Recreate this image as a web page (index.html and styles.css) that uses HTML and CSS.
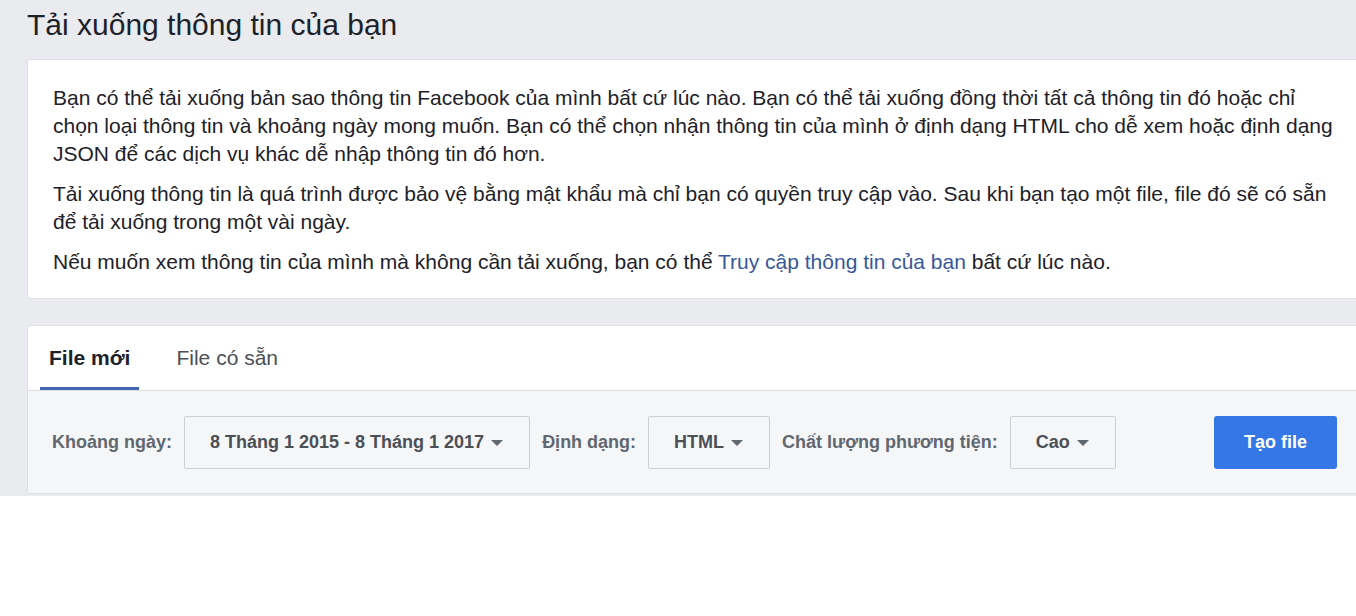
FILE: index.html
```html
<!DOCTYPE html>
<html lang="vi">
<head>
<meta charset="utf-8">
<title>Tải xuống thông tin của bạn</title>
<link rel="stylesheet" href="styles.css">
</head>
<body>
<div class="page">
  <h1 class="title">Tải xuống thông tin của bạn</h1>
  <div class="card intro">
    <p>Bạn có thể tải xuống bản sao thông tin Facebook của mình bất cứ lúc nào. Bạn có thể tải xuống đồng thời tất cả thông tin đó hoặc chỉ chọn loại thông tin và khoảng ngày mong muốn. Bạn có thể chọn nhận thông tin của mình ở định dạng HTML cho dễ xem hoặc định dạng JSON để các dịch vụ khác dễ nhập thông tin đó hơn.</p>
    <p>Tải xuống thông tin là quá trình được bảo vệ bằng mật khẩu mà chỉ bạn có quyền truy cập vào. Sau khi bạn tạo một file, file đó sẽ có sẵn để tải xuống trong một vài ngày.</p>
    <p>Nếu muốn xem thông tin của mình mà không cần tải xuống, bạn có thể <a href="#" class="link">Truy cập thông tin của bạn</a> bất cứ lúc nào.</p>
  </div>
  <div class="card files">
    <div class="tabs">
      <div class="tab active">File mới</div>
      <div class="tab">File có sẵn</div>
    </div>
    <div class="controls">
      <span class="label">Khoảng ngày:</span>
      <div class="select range">8 Tháng 1 2015 - 8 Tháng 1 2017<span class="caret"></span></div>
      <span class="label">Định dạng:</span>
      <div class="select">HTML<span class="caret"></span></div>
      <span class="label">Chất lượng phương tiện:</span>
      <div class="select">Cao<span class="caret"></span></div>
      <button class="create">Tạo file</button>
    </div>
  </div>
</div>
</body>
</html>
```

FILE: styles.css
```css
html, body {
  margin: 0;
  padding: 0;
  background: #ffffff;
  overflow: hidden;
}
body {
  font-family: "Liberation Sans", Arial, sans-serif;
  color: #1d2129;
}
.page {
  background: #e9ebee;
  padding: 0 0 2px 27px;
  width: 1400px;
}
.title {
  margin: 0;
  padding: 8px 0 0 0;
  height: 59px;
  box-sizing: border-box;
  font-size: 30px;
  font-weight: normal;
  line-height: 34px;
  color: #1d2129;
}
.card {
  width: 1336px;
  background: #fff;
  border: 1px solid #dddfe2;
  border-radius: 3px;
  box-sizing: border-box;
}
.intro {
  padding: 24px 24px 22px 25px;
}
.intro p {
  margin: 0 0 12px 0;
  font-size: 21px;
  line-height: 28px;
}
.intro p:last-child {
  margin-bottom: 0;
}
.link {
  color: #365899;
  text-decoration: none;
}
.files {
  margin-top: 26px;
  overflow: hidden;
}
.tabs {
  display: flex;
  gap: 28px;
  padding-left: 12px;
  border-bottom: 1px solid #dddfe2;
  box-sizing: border-box;
  height: 65px;
}
.tab {
  padding: 3px 9px 0 9px;
  font-size: 21px;
  line-height: 58px;
  color: #4b4f56;
  border-bottom: 3px solid transparent;
}
.tab.active {
  font-weight: bold;
  color: #1d2129;
  border-bottom-color: #4267b2;
}
.controls {
  background: #f5f6f7;
  display: flex;
  align-items: center;
  gap: 12px;
  padding: 25px 25px 24px 24px;
}
.label {
  font-size: 18px;
  font-weight: bold;
  color: #606770;
}
.select {
  display: flex;
  align-items: center;
  height: 53px;
  box-sizing: border-box;
  padding: 0 26px 0 25px;
  border: 1px solid #ccd0d5;
  border-radius: 2px;
  background: #f5f6f7;
  font-size: 18px;
  font-weight: bold;
  color: #4b4f56;
}
.caret {
  width: 0;
  height: 0;
  margin-left: 7px;
  margin-top: 1px;
  border-left: 6px solid transparent;
  border-right: 6px solid transparent;
  border-top: 6px solid #606770;
}
.create {
  margin-left: auto;
  width: 123px;
  height: 53px;
  border: none;
  border-radius: 3px;
  background: #3578e5;
  color: #fff;
  font-family: "Liberation Sans", Arial, sans-serif;
  font-size: 18px;
  font-weight: bold;
  cursor: pointer;
}
```
